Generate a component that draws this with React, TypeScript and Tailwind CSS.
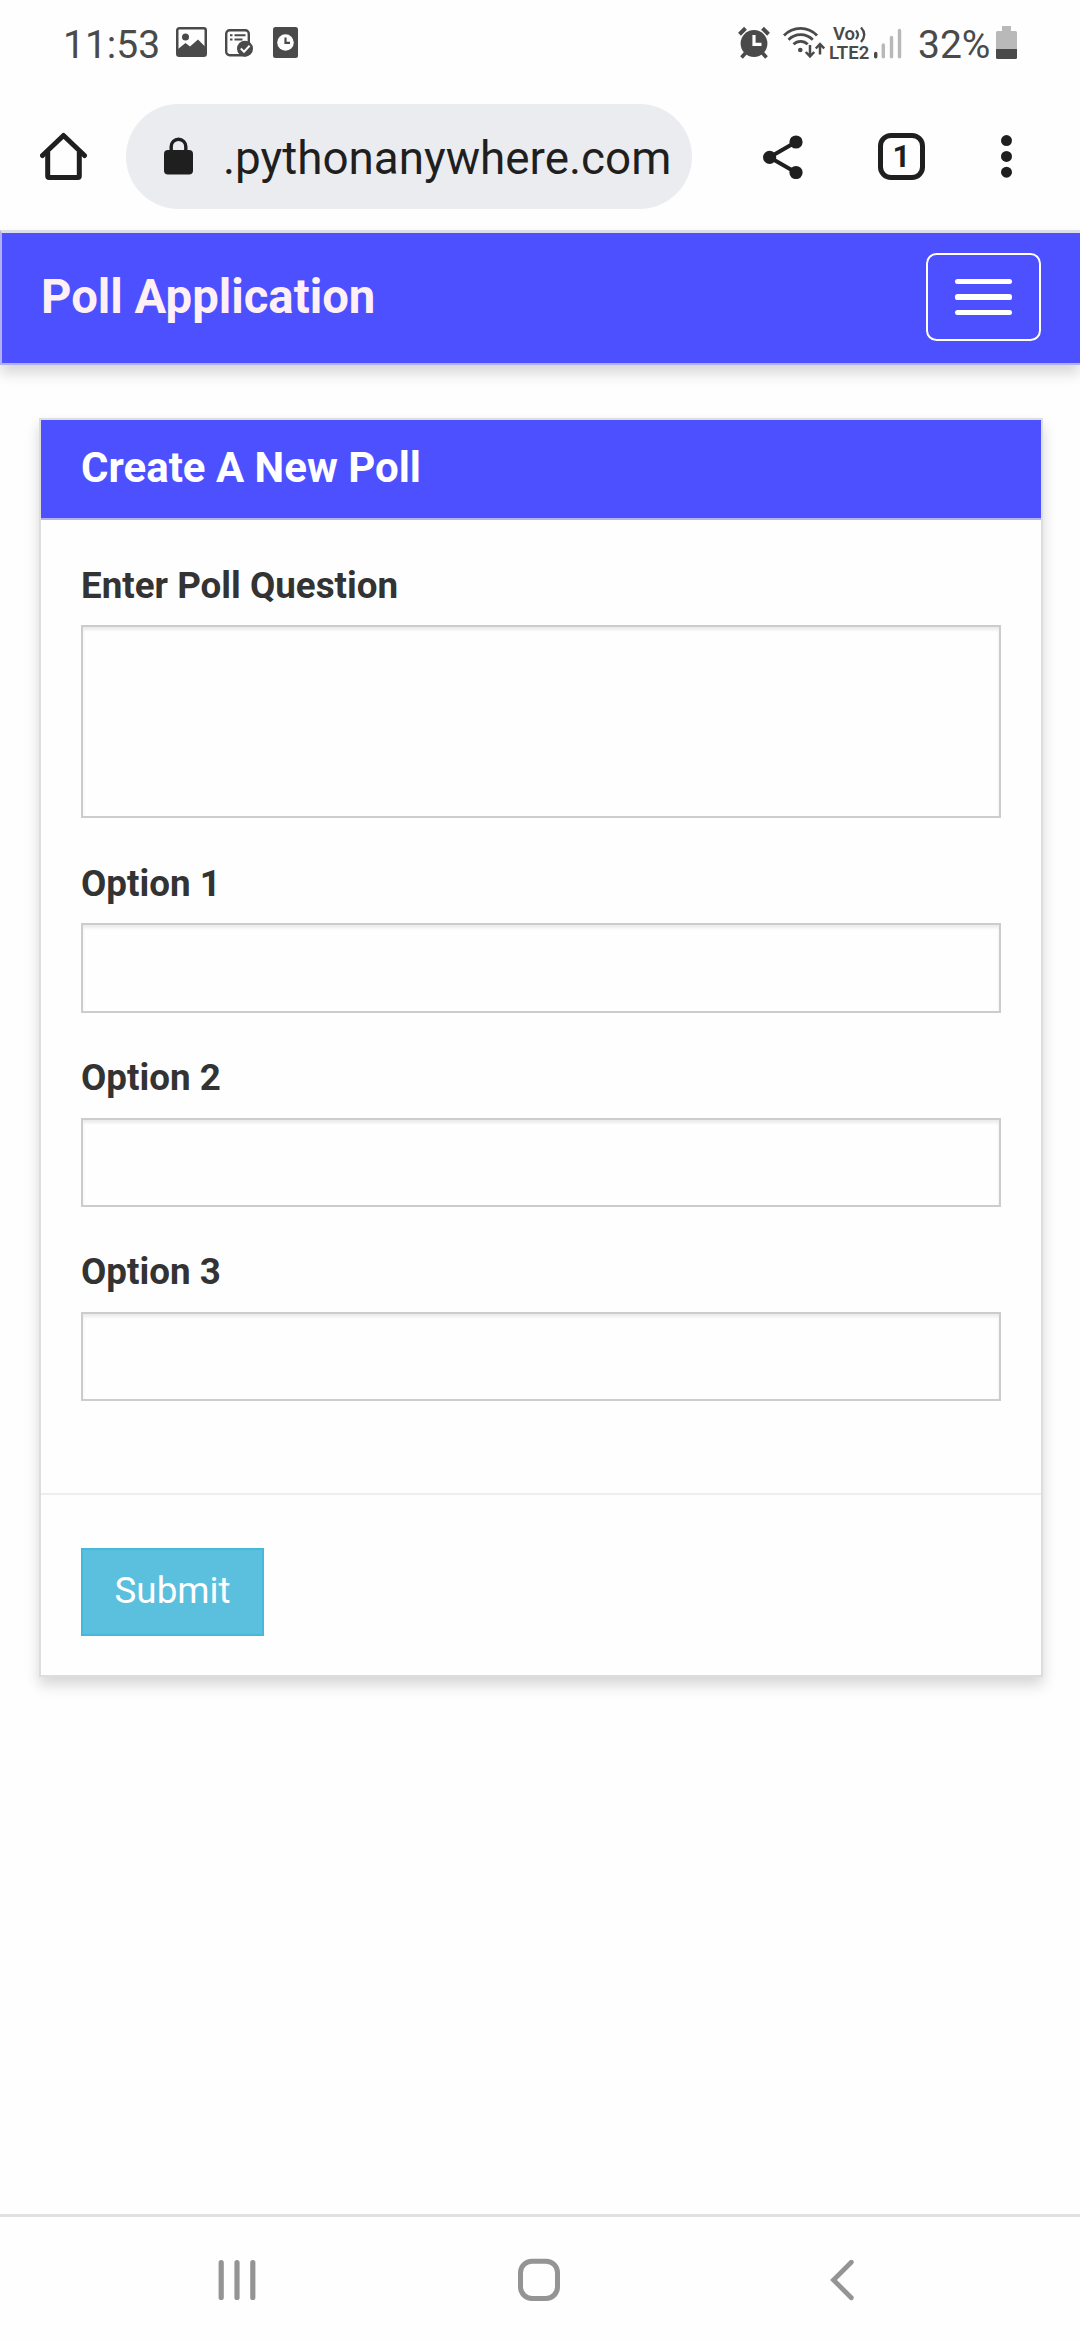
import React from "react";

function StatusBar() {
  return (
    <header className="flex h-[88px] w-full shrink-0 items-start pt-[24px] text-[#4a4a4a]">
      <span className="ml-[63px] mt-[1px] w-[113px] text-[39px] leading-[41px]">11:53</span>
      <svg className="mt-[2px] shrink-0" width="31" height="32" viewBox="0 0 31 32">
        <rect x="1.25" y="2.25" width="28.5" height="27.5" rx="2" fill="none" stroke="#4a4a4a" strokeWidth="2.5" />
        <circle cx="9.5" cy="11" r="3.5" fill="#4a4a4a" />
        <path d="M2 23 L9.500 17 L14 20.500 L22 13.500 L29.500 21 V29.500 H2Z" fill="#4a4a4a" />
      </svg>
      <svg className="ml-[18px] mt-[2px] shrink-0" width="29" height="32" viewBox="0 0 29 32">
        <rect x="1.200" y="4.200" width="22.600" height="25" rx="3.500" fill="none" stroke="#4a4a4a" strokeWidth="2.400" />
        <path d="M5 9.200h2.500M9.500 9.200h11M5 13.500h2.500M9.500 13.500h8" stroke="#4a4a4a" strokeWidth="1.900" />
        <circle cx="20" cy="22.700" r="8" fill="#4a4a4a" />
        <path d="M15.800 22.500l3.200 3.200 5.600-6" fill="none" stroke="#fefefe" strokeWidth="2" />
      </svg>
      <svg className="ml-[19px] mt-[2px] shrink-0" width="25" height="32" viewBox="0 0 25 32">
        <rect x="0" y="1" width="25" height="31" rx="2.500" fill="#4a4a4a" />
        <circle cx="12.500" cy="16.500" r="8.300" fill="#fefefe" />
        <path d="M12.500 11.500v5.300h4.500" fill="none" stroke="#4a4a4a" strokeWidth="2.200" />
      </svg>

      <svg className="ml-[439px] mt-[2px] shrink-0" width="34" height="33" viewBox="0 0 34 33">
        <circle cx="17" cy="17.500" r="13.400" fill="#4a4a4a" />
        <path d="M2.500 8.200L8.500 2.300M25.500 2.300l6 5.900" stroke="#4a4a4a" strokeWidth="4" />
        <path d="M8.500 27l-4 4.500M25.500 27l4 4.500" stroke="#4a4a4a" strokeWidth="3.600" />
        <path d="M17 9v9.300h7.500" fill="none" stroke="#fefefe" strokeWidth="3.200" />
      </svg>
      <svg className="ml-[12px] mt-[2px] shrink-0" width="42" height="33" viewBox="0 0 42 33">
        <g fill="none" stroke="#4a4a4a" strokeWidth="2.800">
          <path d="M1 9.500a22.500 22.500 0 0 1 33 0" />
          <path d="M5.500 13.800a17 17 0 0 1 24.300 0" />
          <path d="M10.500 18.300a10 10 0 0 1 14.200 0" />
          <path d="M27 19v11M22.800 26l4.200 4.500 4.200-4.500" strokeWidth="2.500" />
          <path d="M37 28.500v-10M32.800 22.500l4.200-4.500 4.200 4.500" strokeWidth="2.500" />
        </g>
        <circle cx="17.300" cy="24" r="2.300" fill="#4a4a4a" />
      </svg>
      <div className="ml-[4px] mt-[2px] flex w-[45px] shrink-0 flex-col">
        <div className="ml-[4px] flex h-[17px] items-center">
          <span className="text-[18.500px] font-semibold leading-[17px]">Vo</span>
          <svg width="12" height="17" viewBox="0 0 12 17">
            <path d="M1 4.500q4 4 0 8.500M6 1.500q6.500 7 0 14.500" fill="none" stroke="#4a4a4a" strokeWidth="2.300" />
          </svg>
        </div>
        <span className="h-[17px] text-[18.500px] font-semibold leading-[20px]">LTE2</span>
      </div>
      <svg className="shrink-0" width="28" height="35" viewBox="0 0 28 35">
        <path d="M1.700 29.500v3.200" stroke="#4a4a4a" strokeWidth="3.400" strokeLinecap="round" />
        <path d="M9.300 21v11.700M17.500 13.500v19.200M25.500 6.500v26.200" stroke="#b8b8b8" strokeWidth="3.400" strokeLinecap="round" />
      </svg>
      <span className="ml-[16px] mt-[1px] w-[75px] text-[39px] leading-[41px]">32%</span>
      <svg className="ml-[3px] mt-[2px] shrink-0" width="21" height="33" viewBox="0 0 21 33">
        <path d="M6 0h9v5h4.500q1.500 0 1.500 1.500V24H0V6.500Q0 5 1.500 5H6z" fill="#b9b9b9" />
        <path d="M0 23h21v8.500q0 1.500-1.500 1.500h-18Q0 33 0 31.500z" fill="#4a4a4a" />
      </svg>
    </header>
  );
}

function BrowserBar() {
  return (
    <div className="flex h-[142px] w-full shrink-0 items-start pt-[16px] text-[#1f1f1f]">
      <svg className="ml-[40px] mt-[28px] shrink-0" width="48" height="50" viewBox="0 0 48 50">
        <path d="M2.500 23.500L23.500 3.500L44.500 23.500" fill="none" stroke="#1f1f1f" strokeWidth="5" strokeLinecap="round" strokeLinejoin="round" />
        <path d="M7.700 20v24q0 1.500 1.500 1.500h28.600q1.500 0 1.500-1.500V20" fill="none" stroke="#1f1f1f" strokeWidth="5" />
      </svg>
      <div className="ml-[38px] flex h-[105px] w-[566px] shrink-0 items-center overflow-hidden rounded-full bg-[#ebecf0]">
        <svg className="-mt-[2px] ml-[38px] shrink-0" width="29" height="38" viewBox="0 0 29 38">
          <rect x="0" y="13" width="29" height="24.500" rx="4" fill="#1f1f1f" />
          <path d="M7.200 14V9.500a7.300 7.300 0 0 1 14.600 0V14" fill="none" stroke="#1f1f1f" strokeWidth="3.400" />
        </svg>
        <span className="ml-[30px] mt-[4px] whitespace-nowrap text-[45.800px] leading-[56px]">.pythonanywhere.com</span>
      </div>
      <svg className="ml-[71px] mt-[31px] shrink-0" width="40" height="44" viewBox="0 0 40 44">
        <path d="M33 7L6.500 22.300L33 37.500" fill="none" stroke="#1f1f1f" strokeWidth="4" />
        <circle cx="33" cy="7" r="6.600" fill="#1f1f1f" />
        <circle cx="6.600" cy="22.300" r="6.600" fill="#1f1f1f" />
        <circle cx="33" cy="37.500" r="6.600" fill="#1f1f1f" />
      </svg>
      <div className="ml-[75px] mt-[29px] flex h-[47px] w-[47px] shrink-0 items-center justify-center rounded-[13px] border-[5px] border-[#1f1f1f]">
        <span className="text-[31px] font-bold leading-[37px]">1</span>
      </div>
      <svg className="ml-[76px] mt-[31px] shrink-0" width="11" height="43" viewBox="0 0 11 43">
        <circle cx="5.500" cy="5.600" r="5.500" fill="#1f1f1f" />
        <circle cx="5.500" cy="21.400" r="5.500" fill="#1f1f1f" />
        <circle cx="5.500" cy="37.200" r="5.500" fill="#1f1f1f" />
      </svg>
    </div>
  );
}

function Navbar() {
  return (
    <nav className="flex h-[135px] w-full shrink-0 items-start border-b-2 border-l-2 border-t-[3px] border-b-[#b0b0f3] border-l-[#b0b0f3] border-t-[#dcdde8] bg-[#4d50ff] pl-[39px] pr-[39px] pt-[20px] shadow-[0_8px_13px_rgba(0,0,0,0.16)]">
      <a className="mt-[16px] text-[47.25px] font-bold leading-[56px] text-[#fff0f5]">Poll Application</a>
      <button className="ml-auto flex h-[88px] w-[115px] flex-col items-center rounded-[10.500px] border-2 border-white pt-[24px]">
        <span className="h-[5px] w-[57px] rounded-[2.600px] bg-white" />
        <span className="mt-[10px] h-[6px] w-[57px] rounded-[2.600px] bg-white" />
        <span className="mt-[10px] h-[5px] w-[57px] rounded-[2.600px] bg-white" />
      </button>
    </nav>
  );
}

function OptionField({ label }: { label: string }) {
  return (
    <div className="mb-[39.25px]">
      <label className="block h-[52.500px] text-[36.75px] font-bold leading-[52px]">{label}</label>
      <input
        type="text"
        className="mt-[13.250px] block h-[89.250px] w-full border-2 border-[#ccc] bg-[#fefefe] shadow-[inset_0_3px_3px_rgba(0,0,0,0.075)]"
      />
    </div>
  );
}

function PollCard() {
  return (
    <main className="mx-auto mt-[53px] h-[1259px] w-[1004px] shrink-0 translate-x-[1px] border-2 border-[#ddd] bg-[#fefefe] shadow-[0_8px_13px_rgba(0,0,0,0.16)]">
      <h3 className="h-[100px] border-b-2 border-[#b3b3f2] bg-[#4d50ff] pl-[40px] pt-[23px] text-[42px] font-bold leading-[50px] text-white">
        Create A New Poll
      </h3>
      <form className="text-[#333]">
        <div className="h-[973px] px-[40px] pt-[39px]">
          <div className="mb-[39.900px]">
            <label className="block h-[52.500px] pt-[1px] text-[36.75px] font-bold leading-[52px]">Enter Poll Question</label>
            <textarea className="mt-[13.250px] block h-[193px] w-full resize-none border-2 border-[#ccc] bg-[#fefefe] shadow-[inset_0_3px_3px_rgba(0,0,0,0.075)]" />
          </div>
          <OptionField label="Option 1" />
          <OptionField label="Option 2" />
          <OptionField label="Option 3" />
        </div>
        <div className="border-t-2 border-[#eee] px-[40px] pt-[53px]">
          <button
            type="button"
            className="flex h-[88px] w-[183px] items-center justify-center border-2 border-[#46b8da] bg-[#5bc0de] pb-[2px] text-[36.75px] leading-[52px] text-white"
          >
            Submit
          </button>
        </div>
      </form>
    </main>
  );
}

function NavigationBar() {
  return (
    <footer className="mt-auto flex h-[126px] w-full shrink-0 items-start border-t-[3px] border-[#e1e1e1] pt-[41px]">
      <svg className="ml-[218px]" width="38" height="44" viewBox="0 0 38 44">
        <path d="M3.200 4.500v35M19 4.500v35M34.800 4.500v35" stroke="#949494" strokeWidth="5.200" strokeLinecap="round" />
      </svg>
      <svg className="ml-[262px]" width="42" height="44" viewBox="0 0 42 44">
        <rect x="2.500" y="3.200" width="37" height="37.300" rx="11.500" fill="none" stroke="#949494" strokeWidth="5" />
      </svg>
      <svg className="ml-[270px]" width="25" height="44" viewBox="0 0 25 44">
        <path d="M21.300 4.300L3.500 22L21.300 39.700" fill="none" stroke="#949494" strokeWidth="4.800" strokeLinecap="round" />
      </svg>
    </footer>
  );
}

export default function App() {
  return (
    <div className="flex h-[2340px] w-[1080px] flex-col overflow-hidden bg-[#fefefe] font-['Roboto',sans-serif]">
      <StatusBar />
      <BrowserBar />
      <Navbar />
      <PollCard />
      <NavigationBar />
    </div>
  );
}
